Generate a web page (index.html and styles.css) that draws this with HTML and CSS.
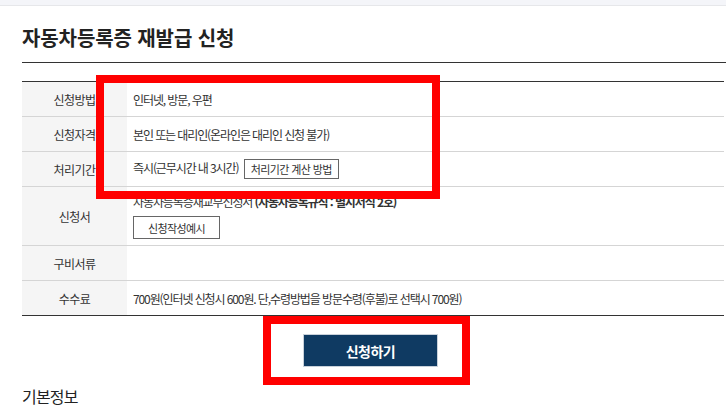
FILE: index.html
```html
<!DOCTYPE html>
<html lang="ko">
<head>
<meta charset="utf-8">
<title>자동차등록증 재발급 신청</title>
<link rel="stylesheet" href="styles.css">
</head>
<body>
<div class="topbar"></div>
<main class="content">
  <h2 class="page-title">자동차등록증 재발급 신청</h2>
  <table class="info">
    <tbody>
      <tr><th>신청방법</th><td>인터넷, 방문, 우편</td></tr>
      <tr><th>신청자격</th><td>본인 또는 대리인(온라인은 대리인 신청 불가)</td></tr>
      <tr><th>처리기간</th><td>즉시(근무시간 내 3시간) <button class="btn-line small">처리기간 계산 방법</button></td></tr>
      <tr class="tall"><th>신청서</th><td><div class="form-name">자동차등록증재교부신청서 <b>(자동차등록규칙 : 별지서식 2호)</b></div><button class="btn-line example">신청작성예시</button></td></tr>
      <tr><th>구비서류</th><td></td></tr>
      <tr class="last"><th>수수료</th><td>700원(인터넷 신청시 600원. 단,수령방법을 방문수령(후불)로 선택시 700원)</td></tr>
    </tbody>
  </table>
  <div class="actions"><button class="btn-apply">신청하기</button></div>
  <h3 class="section-title">기본정보</h3>
</main>
<div class="mark mark-table"></div>
<div class="mark mark-button"></div>
</body>
</html>
```
FILE: styles.css
```css
html, body {
  margin: 0;
  padding: 0;
  background: #fff;
  font-family: "Noto Sans CJK KR", "Noto Sans", sans-serif;
  color: #333;
}
.topbar {
  height: 5px;
  background: #f4f5f9;
  border-bottom: 1px solid #e6e7ea;
}
.content {
  padding: 0 0 0 22px;
}
.page-title {
  margin: 0;
  padding: 18px 0 10px;
  font-size: 20px;
  line-height: 28px;
  font-weight: 700;
  color: #222;
  letter-spacing: -0.1px;
  border-bottom: 1px solid #333;
}
.info {
  margin-top: 18px;
  width: 702px;
  border-collapse: collapse;
  border-top: 1px solid #333;
  font-size: 12px;
  letter-spacing: -1.1px;
}
.info th {
  width: 105px;
  background: #f5f5f5;
  font-weight: 400;
  color: #333;
  text-align: center;
  padding: 0;
  height: 34px;
  letter-spacing: -0.6px;
  border-bottom: 1px solid #d5d5d5;
}
.info td {
  padding: 0 0 0 6px;
  height: 34px;
  border-bottom: 1px solid #d5d5d5;
  color: #333;
}
.info tr.tall th {
  height: 58px;
}
.info tr.tall td {
  height: 58px;
  padding-top: 4px;
  padding-bottom: 4px;
  box-sizing: border-box;
}
.info tr.last th, .info tr.last td {
  border-bottom: 1px solid #333;
}
.form-name {
  line-height: 18px;
}
.form-name b {
  font-weight: 700;
}
.btn-line {
  font-family: inherit;
  background: #fff;
  border: 1px solid #666;
  color: #333;
  font-size: 11px;
  letter-spacing: -0.6px;
  padding: 0;
  cursor: pointer;
}
.btn-line.small {
  width: 95px;
  height: 20px;
  margin-left: 3px;
  vertical-align: middle;
}
.btn-line.example {
  display: block;
  width: 87px;
  height: 23px;
  margin-top: 5px;
}
.actions {
  display: flex;
  justify-content: center;
  width: 697px;
  padding: 18px 5px 0 0;
}
.btn-apply {
  width: 135px;
  height: 33px;
  background: #0f3a62;
  border: 1px solid #c9d1da;
  color: #fff;
  font-family: inherit;
  font-size: 14px;
  font-weight: 700;
  letter-spacing: -0.5px;
}
.section-title {
  margin: 0;
  padding-top: 18px;
  font-size: 16px;
  line-height: 22px;
  font-weight: 400;
  color: #222;
  letter-spacing: -0.8px;
}
.mark {
  position: absolute;
  border: 8px solid #ff0000;
  box-sizing: border-box;
}
.mark-table {
  left: 96px;
  top: 75px;
  width: 344px;
  height: 124px;
}
.mark-button {
  left: 263px;
  top: 316px;
  width: 207px;
  height: 69px;
}
```
